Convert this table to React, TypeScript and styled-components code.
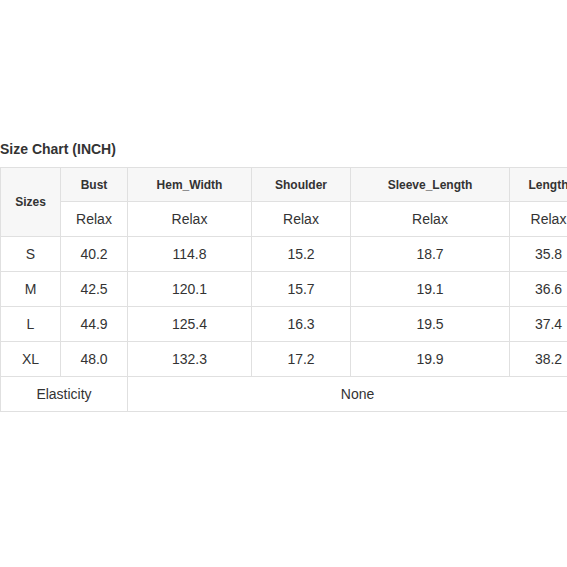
import React from "react";
import styled, { createGlobalStyle } from "styled-components";

const Global = createGlobalStyle`
  html, body { margin: 0; padding: 0; overflow: hidden; background: #fff; }
  body { font-family: "Liberation Sans", Arial, sans-serif; color: #333; }
`;

const Page = styled.div`
  padding-top: 139px;
  width: 567px;
  height: 567px;
  box-sizing: border-box;
  overflow: hidden;
`;

const Title = styled.div`
  font-size: 14px;
  font-weight: bold;
  line-height: 20px;
  margin: 0 0 8px 0;
  color: #333;
  white-space: nowrap;
`;

const Table = styled.table`
  border-collapse: collapse;
  table-layout: fixed;
  width: 587px;
`;

const Cell = styled.td<{ $head?: boolean; $h?: number }>`
  border: 1px solid #e0e0e0;
  text-align: center;
  vertical-align: middle;
  padding: 0;
  height: ${(p) => (p.$h ?? 35) - 1}px;
  font-size: ${(p) => (p.$head ? 12 : 14)}px;
  font-weight: ${(p) => (p.$head ? "bold" : "normal")};
  background: ${(p) => (p.$head ? "#f7f7f7" : "#fff")};
  color: #333;
  white-space: nowrap;
`;

const widths = [60, 67, 124, 99, 159, 78];
const heads = ["Bust", "Hem_Width", "Shoulder", "Sleeve_Length", "Length"];
const rows: [string, string[]][] = [
  ["S", ["40.2", "114.8", "15.2", "18.7", "35.8"]],
  ["M", ["42.5", "120.1", "15.7", "19.1", "36.6"]],
  ["L", ["44.9", "125.4", "16.3", "19.5", "37.4"]],
  ["XL", ["48.0", "132.3", "17.2", "19.9", "38.2"]],
];

export default function App() {
  return (
    <>
      <Global />
      <Page>
        <Title>Size Chart (INCH)</Title>
        <Table>
          <colgroup>
            {widths.map((w, i) => (
              <col key={i} style={{ width: w }} />
            ))}
          </colgroup>
          <tbody>
            <tr>
              <Cell as="th" $head rowSpan={2}>Sizes</Cell>
              {heads.map((h) => (
                <Cell as="th" $head $h={34} key={h}>{h}</Cell>
              ))}
            </tr>
            <tr>
              {heads.map((h) => (
                <Cell key={h}>Relax</Cell>
              ))}
            </tr>
            {rows.map(([s, vals]) => (
              <tr key={s}>
                <Cell>{s}</Cell>
                {vals.map((v, i) => (
                  <Cell key={i}>{v}</Cell>
                ))}
              </tr>
            ))}
            <tr>
              <Cell colSpan={2}>Elasticity</Cell>
              <Cell colSpan={4}>None</Cell>
            </tr>
          </tbody>
        </Table>
      </Page>
    </>
  );
}
